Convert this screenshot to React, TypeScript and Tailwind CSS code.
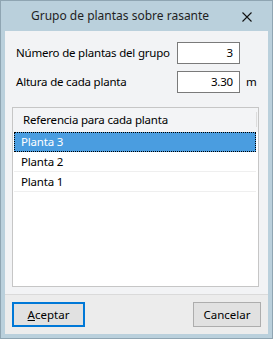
import React from 'react';

export default function App() {
  const rows = ['Planta 3', 'Planta 2', 'Planta 1'];
  const font = { fontFamily: '"Noto Sans", "Segoe UI", sans-serif' };

  return (
    <div
      className="w-[273px] h-[339px] flex flex-col bg-[#bad0dc] border border-[#8fa5b2] text-[11.5px] text-black whitespace-nowrap"
      style={font}
    >
      {/* Title bar */}
      <div className="h-[30px] flex items-center pl-[30px] pr-[20px] text-[#1f1f1f]">
        <span className="flex-1 text-[12px] leading-none">Grupo de plantas sobre rasante</span>
        <svg width="10" height="10" viewBox="0 0 10 10" className="mt-[1px]">
          <path d="M0.5 0.5 L9.5 9.5 M9.5 0.5 L0.5 9.5" stroke="#111" strokeWidth="1.1" />
        </svg>
      </div>

      {/* Body */}
      <div className="flex-1 mx-[4px] mb-[4px] flex flex-col bg-[#f2f3f5]">
        <div className="flex-1 flex flex-col px-[7px] pt-[11px] tracking-[-0.2px]">
          <div className="flex items-center h-[22px]">
            <span className="w-[165px] pl-[4px]">Número de plantas del grupo</span>
            <div className="w-[63px] h-[22px] border border-[#7a7a7a] bg-white flex items-center justify-end pr-[6px]">3</div>
          </div>
          <div className="flex items-center h-[22px] mt-[7px]">
            <span className="w-[165px] pl-[4px]">Altura de cada planta</span>
            <div className="w-[63px] h-[22px] border border-[#7a7a7a] bg-white flex items-center justify-end pr-[6px]">3.30</div>
            <span className="ml-[6px]">m</span>
          </div>

          {/* List */}
          <div className="mt-[14px] mr-[2px] h-[180px] border border-[#c6c6c6] bg-white flex flex-col">
            <div className="h-[24px] flex items-center bg-[#f3f4f6] relative pl-[10px]">
              Referencia para cada planta
              <div className="absolute right-[1px] top-[4px] w-[1px] h-[15px] bg-[#dcdcdc]" />
            </div>
            {rows.map((r, i) => (
              <div
                key={r}
                className={
                  i === 0
                    ? 'h-[20px] mx-[1px] mr-[2px] flex items-center pl-[6px] bg-[#4a9de0] text-white border border-dotted border-black'
                    : 'h-[20px] mx-[1px] mr-[2px] flex items-center pl-[7px] border-b border-[#efefef]'
                }
              >
                {r}
              </div>
            ))}
          </div>
        </div>

        {/* Footer */}
        <div className="h-[40px] border-t border-[#dadada] bg-[#ececec] flex items-start justify-between px-[7px] pt-[7px]">
          <button className="w-[73px] h-[25px] border-2 border-[#0078d7] bg-[#e1e1e1] flex items-center justify-center">
            <span><span className="underline">A</span>ceptar</span>
          </button>
          <button className="w-[68px] h-[25px] border border-[#adadad] bg-[#e1e1e1] flex items-center justify-center">
            Cancelar
          </button>
        </div>
      </div>
    </div>
  );
}
